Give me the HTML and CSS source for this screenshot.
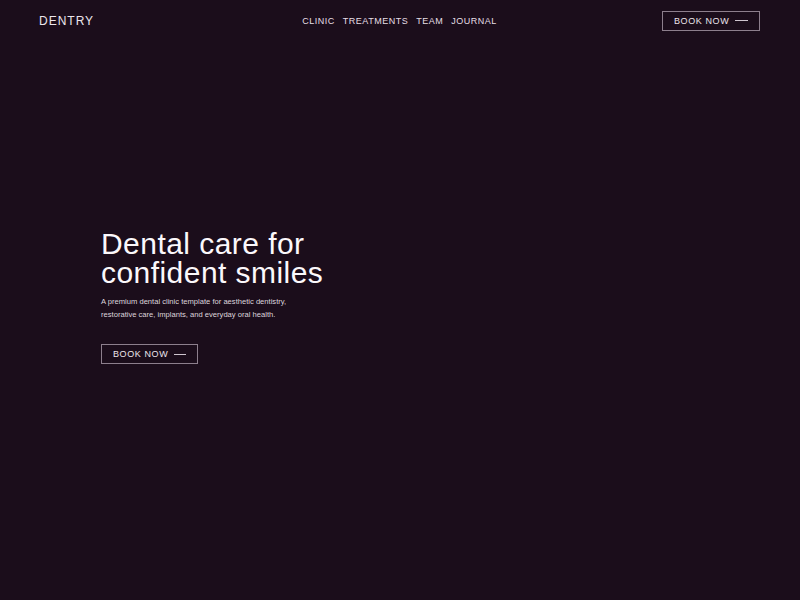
FILE: index.html
```html
<!DOCTYPE html>
<html lang="en">
<head>
<meta charset="utf-8">
<title>Dentry — Dental care for confident smiles</title>
<link rel="stylesheet" href="styles.css">
</head>
<body>
<div class="page">
  <header class="topbar">
    <a class="logo" href="#">DENTRY</a>
    <nav class="nav">
      <a href="#">CLINIC</a>
      <a href="#">TREATMENTS</a>
      <a href="#">TEAM</a>
      <a href="#">JOURNAL</a>
    </nav>
    <a class="btn btn-top" href="#">BOOK NOW <span class="dash"></span></a>
  </header>
  <main class="hero">
    <div class="hero-copy">
      <h1>Dental care for<br>confident smiles</h1>
      <p>A premium dental clinic template for aesthetic dentistry,<br>restorative care, implants, and everyday oral health.</p>
      <a class="btn btn-hero" href="#">BOOK NOW <span class="dash"></span></a>
    </div>
  </main>
</div>
</body>
</html>
```
FILE: styles.css
```css
* { box-sizing: border-box; }
html, body { margin: 0; padding: 0; }
body {
  background: #1b0d1b;
  color: #f3eef3;
  font-family: "Liberation Sans", Arial, sans-serif;
}
a { color: inherit; text-decoration: none; }

.page {
  min-height: 600px;
  display: flex;
  flex-direction: column;
}

.topbar {
  display: grid;
  grid-template-columns: 1fr auto 1fr;
  align-items: center;
  padding: 10px 40px 0 39px;
  height: 31px;
}
.logo {
  font-size: 12px;
  letter-spacing: 1px;
  color: #ece6ec;
}
.nav {
  display: flex;
  gap: 8px;
  font-size: 9px;
  letter-spacing: 0.5px;
  color: #e6dfe6;
}
.btn {
  display: inline-flex;
  align-items: center;
  gap: 6px;
  border: 1px solid #8d7f8d;
  height: 20px;
  padding: 0 11px;
  font-size: 9px;
  letter-spacing: 0.6px;
  white-space: nowrap;
  color: #ece6ec;
}
.btn-top { justify-self: end; width: 98px; }
.dash {
  display: inline-block;
  width: 16px;
  height: 1px;
  background: #cfc5cf;
}

.hero {
  flex: 1;
  padding: 198px 0 0 101px;
}
.hero h1 {
  margin: 0;
  font-weight: 400;
  font-size: 30px;
  line-height: 29px;
  letter-spacing: 0.45px;
  color: #fbf8fb;
}
.hero p {
  margin: 8px 0 22px;
  font-size: 7.6px;
  line-height: 13px;
  color: #ddd5dd;
}
.btn-hero { width: 97px; }
```
